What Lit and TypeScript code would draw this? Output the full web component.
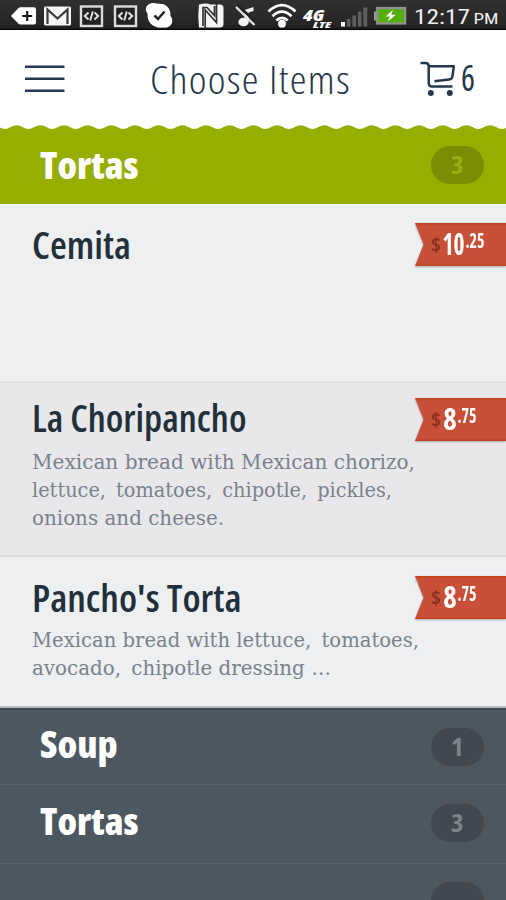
import { LitElement, html, svg, css, nothing } from "lit";
import { customElement, property } from "lit/decorators.js";

/** A single line of text condensed to a given advance width. */
@customElement("fit-text")
class FitText extends LitElement {
  @property() text = "";
  @property({ type: Number }) width = 100;
  @property({ type: Number }) height = 40;
  @property({ type: Number }) baseline = 30;
  static styles = css`
    :host { display: block; line-height: 0; }
    svg { display: block; overflow: visible; }
    text { fill: currentColor; white-space: pre; }
  `;
  render() {
    return html`<svg width=${this.width} height=${this.height}>
      <text x="0" y=${this.baseline} textLength=${this.width} lengthAdjust="spacingAndGlyphs">${this.text}</text>
    </svg>`;
  }
}

const fit = (cls: string, text: string, width: number, height: number, baseline: number) =>
  html`<fit-text class=${cls} .text=${text} .width=${width} .height=${height} .baseline=${baseline}></fit-text>`;

@customElement("status-bar")
class StatusBar extends LitElement {
  static styles = css`
    :host {
      display: grid;
      grid-template-columns: 33px 36px 34px 31px 51px 39px 32px 36px 38px 33px 41px 85px;
      justify-content: start;
      box-sizing: border-box;
      height: 30px;
      padding-left: 11px;
      background: linear-gradient(#303030, #262626 80%, #1c1c1c);
      border-bottom: 1px solid #000;
    }
    svg { display: block; overflow: visible; }
    text { font-family: Roboto, "Open Sans", sans-serif; fill: #efefef; }
    .lte { font-family: "Open Sans", sans-serif; font-weight: 800; font-style: italic; fill: #fff; }
  `;
  code = () => html`<svg width="23" height="29">
    <rect x="1" y="6.5" width="21" height="19.5" fill="#222" stroke="#dcdcdc" stroke-width="2.4"/>
    <path d="M8.5 12.5L4.8 16L8.5 19.5M14.5 12.5L18.2 16L14.5 19.5M12.8 11.5L10.2 20.5" fill="none" stroke="#e4e4e4" stroke-width="1.9"/></svg>`;
  render() {
    return html`
      <svg width="26" height="29"><path d="M0 16L7.5 8Q8.2 7.3 9.5 7.3H23Q25 7.3 25 9.3V22.5Q25 24.5 23 24.5H9.5Q8.2 24.5 7.5 23.8Z" fill="#fff"/>
        <path d="M16.2 11V21M11.2 16H21.2" stroke="#1a1a1a" stroke-width="2.2"/></svg>
      <svg width="27" height="29"><rect x="0" y="6.5" width="27" height="19" rx="1.5" fill="#f6f6f6"/>
        <path d="M3.5 24V9.5L13.5 18.5L23.5 9.5V24" fill="none" stroke="#3a3a3a" stroke-width="2.2"/></svg>
      ${this.code()}${this.code()}
      <svg width="30" height="29"><path d="M8 3Q11 3 12.500 3.800Q20 3 23.500 8Q26 11.500 25.500 16Q28 19 27 23Q24.500 28.500 18.500 27.500Q10 28.500 5.500 23.500Q2 19.500 2.700 14Q-0.200 10 1.500 6.500Q4 3 8 3Z" fill="#fff"/>
        <path d="M9.500 15.500L13 19L19.500 11.500" fill="none" stroke="#222" stroke-width="2.500"/></svg>
      <svg width="29" height="29"><path d="M3 4.500Q11 2.500 14 4.500H24Q27.500 4.500 27.500 8V24Q27.500 27.500 24 27.500H15L9 27.500H3Q1.500 16 3 4.500Z" fill="#f5f5f5"/>
        <path d="M9.200 28V10L20.500 22.500V4M7 26V7.500H11L18.500 15.500V6" fill="none" stroke="#333" stroke-width="1.700"/></svg>
      <svg width="22" height="29"><path d="M9.500 22V10L18.500 7V11L13.500 12.500V22Z" fill="#f2f2f2"/>
        <ellipse cx="8.500" cy="22" rx="5.200" ry="4.300" fill="#f2f2f2"/>
        <path d="M3 5L21.500 23" stroke="#242424" stroke-width="2.600"/><path d="M1 7L19.500 25" stroke="#e4e4e4" stroke-width="2.400"/></svg>
      <svg width="31" height="29"><g fill="none" stroke="#fff" stroke-width="2.700">
        <path d="M1.500 11.500Q15 -1.200 28.500 11.500M5.500 16.200Q15 7.200 24.500 16.200M9.300 20.500Q15 15.200 20.700 20.500"/></g><circle cx="15" cy="23.700" r="3.900" fill="#fff"/></svg>
      <svg width="30" height="29"><text class="lte" x="0" y="20.500" font-size="16" textLength="21" lengthAdjust="spacingAndGlyphs">4G</text>
        <text class="lte" x="10" y="27.500" font-size="8.500" textLength="18" lengthAdjust="spacingAndGlyphs">LTE</text></svg>
      <svg width="28" height="29"><rect x="0" y="22" width="4" height="4.500" fill="#fff"/><g fill="#5e5e5e">
        <rect x="5.800" y="19" width="3.700" height="7.500"/><rect x="11.300" y="15.500" width="3.700" height="11"/><rect x="16.800" y="11.500" width="3.700" height="15"/><rect x="22.300" y="7.500" width="4" height="19"/></g></svg>
      <svg width="33" height="29"><rect x="0" y="11.500" width="4" height="9" fill="#999"/><rect x="3.200" y="8" width="28" height="15.500" fill="#55ae0c" stroke="#929292" stroke-width="2.200"/>
        <path d="M19 9.800L11.500 16.500H16L13.500 21.500L22 14.800H17.200Z" fill="#fff"/></svg>
      <svg width="84" height="29"><text x="-1" y="24.300" font-size="21" textLength="56" lengthAdjust="spacingAndGlyphs">12:17</text><text x="58.500" y="24.300" font-size="15.500" textLength="25" lengthAdjust="spacingAndGlyphs">PM</text></svg>`;
  }
}

@customElement("price-tag")
class PriceTag extends LitElement {
  @property() whole = "";
  @property() cents = "";
  static styles = css`
    :host { display: block; width: 91px; height: 43px; filter: drop-shadow(0 1px 1px rgba(60, 70, 80, 0.4)); }
    svg { display: block; }
    text { font-family: "Open Sans", "Noto Sans", sans-serif; font-stretch: 75%; font-weight: 700; fill: #fff; }
    .dollar { fill: #8b301d; }
  `;
  render() {
    const two = this.whole.length > 1;
    return html`<svg width="91" height="43">
      <path d="M0 0H91V43H0L8.500 21.500Z" fill="#c95038"/>
      <path d="M0.500 0.800H91M0.500 42.200H91" stroke="#c14318" stroke-width="1.600"/>
      <text class="dollar" x="16" y="29" font-size="19.500" textLength="10" lengthAdjust="spacingAndGlyphs">$</text>
      <text x=${two ? 27.5 : 28.3} y="32.300" font-size="31" textLength=${two ? 22 : 13.5} lengthAdjust="spacingAndGlyphs">${this.whole}</text>
      <text x=${two ? 50.5 : 42.5} y="24.800" font-size="21" textLength="19" lengthAdjust="spacingAndGlyphs">.${this.cents}</text>
    </svg>`;
  }
}

interface Line { text: string; width: number }
interface Item { cls: string; name: string; width: number; whole: string; cents: string; lines: Line[] }

const ITEMS: Item[] = [
  { cls: "item first", name: "Cemita", width: 99, whole: "10", cents: "25", lines: [] },
  { cls: "item alt", name: "La Choripancho", width: 214.5, whole: "8", cents: "75", lines: [
    { text: "Mexican bread with Mexican chorizo,", width: 383 },
    { text: "lettuce, \u2009tomatoes, \u2009chipotle, \u2009pickles,", width: 360 },
    { text: "onions and cheese.", width: 192 },
  ] },
  { cls: "item last", name: "Pancho's Torta", width: 209.5, whole: "8", cents: "75", lines: [
    { text: "Mexican bread with lettuce, \u2009tomatoes,", width: 387 },
    { text: "avocado, \u2009chipotle dressing …", width: 299 },
  ] },
];

@customElement("app-root")
class AppRoot extends LitElement {
  static styles = css`
    :host { display: flex; flex-direction: column; width: 506px; height: 900px; overflow: hidden; background: #4d575f;
      font-family: "Open Sans", "Noto Sans", sans-serif; font-stretch: 75%; }
    svg { display: block; flex: none; }
    header { display: flex; flex: none; height: 95px; background: #fff; color: #26394a; padding-left: 25px; }
    .burger { margin-right: 85px; }
    .title { font-size: 39px; font-weight: 330; letter-spacing: 1.2px; margin-right: 69px; }
    .count { font-size: 36px; font-weight: 500; }
    .wave { background: #fff; }
    .group { display: flex; flex: none; justify-content: space-between; align-items: flex-start; box-sizing: border-box;
      padding: 0 22px 0 40px; color: #fff; }
    .green { height: 74px; background: #96ae00; padding-top: 16px; }
    .head { font-size: 37.5px; font-weight: 800; }
    .badge { display: flex; justify-content: center; width: 53px; height: 38px; border-radius: 19px; background: #41494f; color: #7b858c; font-weight: 700; font-size: 24px; }
    .green .badge { background: #7b8e03; color: #98af14; }
    .soup { height: 77px; border-top: 2px solid #3f4a51; border-bottom: 1px solid #566068; padding: 18px 22px 0 40px; }
    .row { height: 79px; border-bottom: 1px solid #566068; padding-top: 19px; }
    .row.tail { border: 0; padding-top: 18px; }
    .item { display: flex; flex: none; justify-content: space-between; box-sizing: border-box; padding-left: 32px; background: #edeff1; }
    .first { height: 177px; padding-top: 18px; border-top: 1px solid #f7f8f5; }
    .alt { height: 176px; padding-top: 15px; background: #e8e8ea; border-top: 2px solid #dddfe1; border-bottom: 2px solid #dcdee0; }
    .last { height: 151px; padding-top: 19px; border-bottom: 2px solid #b5babd; }
    .name { font-size: 37px; font-weight: 550; color: #23303a; }
    .desc { font-family: "DejaVu Serif", serif; font-stretch: normal; font-size: 20.5px; color: #7a828b; }
    .copy { width: 390px; margin-right: -10px; }
  `;
  badge = (n: string) => html`<div class="badge">${n ? fit("", n, 12.5, 38, 28) : nothing}</div>`;
  wave() {
    let d = "M-19 4";
    for (let x = -19; x < 520; x += 23.67) d += `q3 0 6 -2q6 -3.600 12 0q3 2 5.670 2`;
    return html`<svg width="506" height="5">${svg`<path d="${d}V5H-19Z" fill="#96ae00"/>`}</svg>`;
  }
  render() {
    return html`
      <status-bar></status-bar>
      <header>
        <svg class="burger" width="40" height="95"><path d="M0 36.700H39.500M0 48.700H39.500M0 60.700H39.500" stroke="#26394a" stroke-width="2.600"/></svg>
        ${fit("title", "Choose Items", 201, 95, 63.5)}
        <svg width="41" height="95"><g fill="none" stroke="#26394a" stroke-width="2.500" stroke-linejoin="round">
          <path d="M0.500 33H5.500Q8.500 33 8.700 36V52.500Q8.800 56.500 12 56.500H32.500"/>
          <path d="M8.700 36.300H33.800L32.500 46Q32.200 49.300 29 49.600L14.500 51.200"/></g>
          <circle cx="10.800" cy="63" r="3" fill="#26394a"/><circle cx="29.800" cy="63" r="3" fill="#26394a"/></svg>
        ${fit("count", "6", 14, 95, 60.5)}
      </header>
      <div class="wave">${this.wave()}</div>
      <div class="group green">${fit("head", "Tortas", 98.5, 40, 33)}${this.badge("3")}</div>
      ${ITEMS.map((it) => html`<div class=${it.cls}>
        <div class="copy">
          ${fit("name", it.name, it.width, it.cls === "item last" ? 42 : 43, it.cls === "item alt" ? 34 : 35.6)}
          ${it.lines.map((l) => fit("desc", l.text, l.width, 27.8, it.cls === "item alt" ? 28 : 29))}
        </div>
        <price-tag .whole=${it.whole} .cents=${it.cents}></price-tag>
      </div>`)}
      <div class="group soup">${fit("head", "Soup", 77.5, 40, 29.6)}${this.badge("1")}</div>
      <div class="group row">${fit("head", "Tortas", 98.5, 40, 31)}${this.badge("3")}</div>
      <div class="group row tail"><span></span>${this.badge("")}</div>
    `;
  }
}
